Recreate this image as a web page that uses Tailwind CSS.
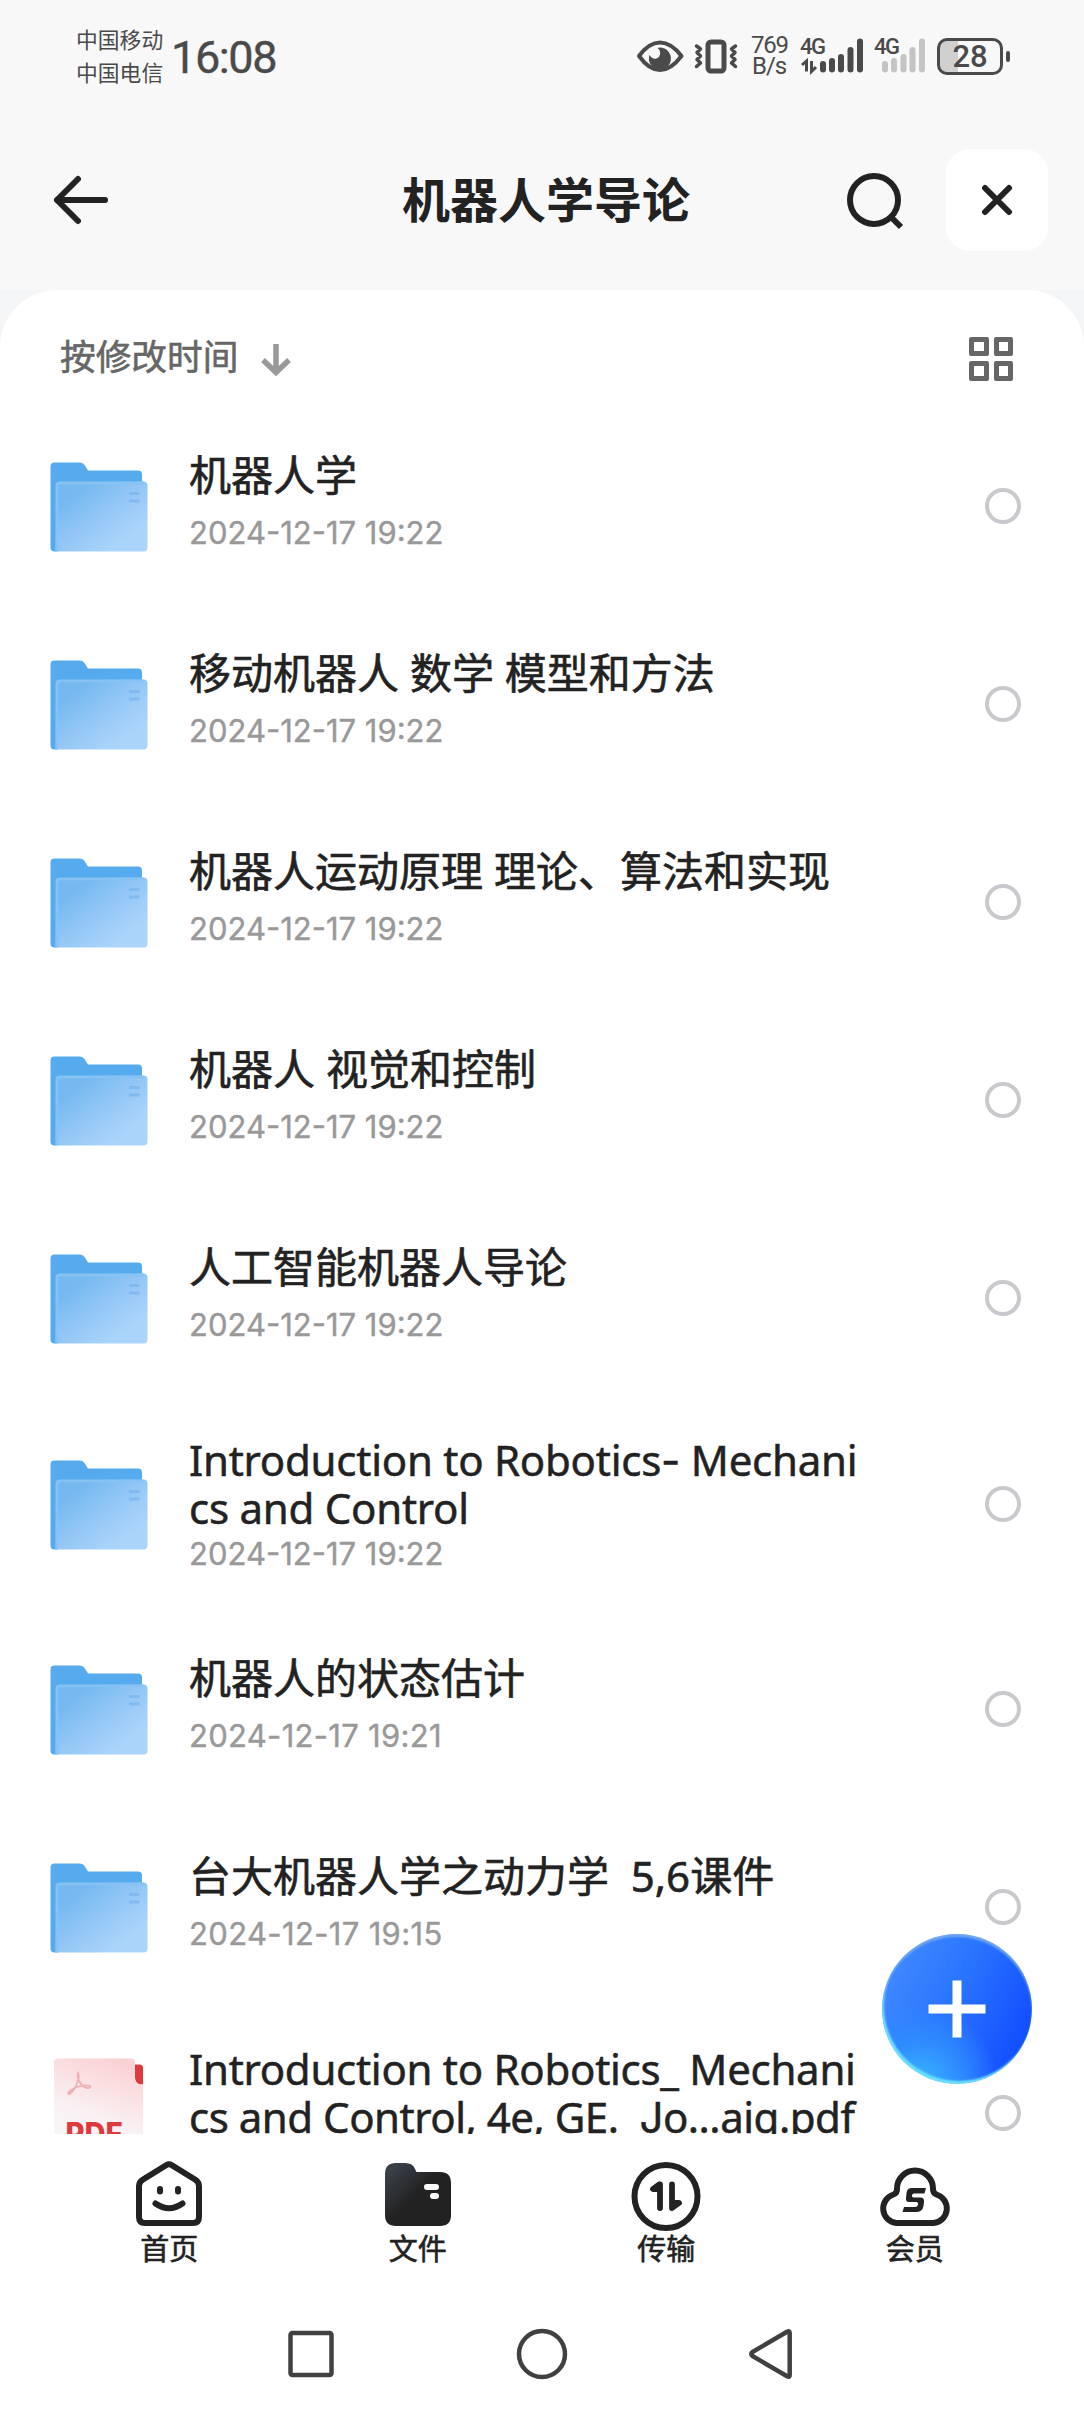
<!DOCTYPE html>
<html lang="zh-CN">
<head>
<meta charset="utf-8">
<title>机器人学导论</title>
<script src="https://cdn.jsdelivr.net/npm/@tailwindcss/browser@4"></script>
</head>
<body class="bg-white">
<svg class="absolute size-0">
  <defs>
    <linearGradient id="front" x1="0" y1="0" x2="1" y2="1">
      <stop offset="0.2" stop-color="#76b9f0"/><stop offset="0.5" stop-color="#94c7f6"/><stop offset="0.8" stop-color="#abd4fa"/>
    </linearGradient>
    <linearGradient id="pdfbg" x1="0.7" y1="0" x2="0.45" y2="0.8">
      <stop offset="0" stop-color="#fbd0d2"/><stop offset="0.7" stop-color="#f9f1f3"/><stop offset="1" stop-color="#f8f5f7"/>
    </linearGradient>
    <linearGradient id="darkfolder" x1="0" y1="0.1" x2="0.6" y2="0.65">
      <stop offset="0.1" stop-color="#3a4049"/><stop offset="0.75" stop-color="#222222"/>
    </linearGradient>
  </defs>
  <symbol id="folder" viewBox="0 0 98 90">
    <path d="M0.5 4.500a4 4 0 0 1 4-4H30q3 0 4.500 2.500L38 8.500H88a4 4 0 0 1 4 4V60H8V89.500H4.500a4 4 0 0 1-4-4Z" fill="#56abee"/>
    <path d="M5.500 23.500a4 4 0 0 1 4-4H93.500a4 4 0 0 1 4 4V85.500a4 4 0 0 1-4 4H5.500Z" fill="url(#front)"/>
    <path d="M7 89V24q0-3 3-3H94" fill="none" stroke="#86c3f4" stroke-width="2.500"/>
    <path d="M79 31.500H89.500M79 39H89.500" stroke="#82b9ee" stroke-width="3"/>
  </symbol>
</svg>
<div class="relative flex h-[2412px] w-[1084px] flex-col overflow-hidden bg-white font-['Noto_Sans','Noto_Sans_CJK_SC',sans-serif] text-[#222222]">

  <!-- Status bar -->
  <div class="flex h-[115px] shrink-0 bg-[#f8f8f8] pl-[76px] text-[#4a4a4a]">
    <div class="w-[88px] pt-[22px] font-['Noto_Sans_CJK_SC',sans-serif] text-[21.800px] leading-[33px]"><div>中国移动</div><div>中国电信</div></div>
    <div class="w-[469px] whitespace-nowrap pl-[7px] pt-[32px] font-['Roboto',sans-serif] text-[45px] leading-[52px] tracking-[-1.400px] [-webkit-text-stroke:0.4px_#4a4a4a]">16:08</div>
    <svg class="h-[115px] w-[115px] shrink-0" viewBox="633 0 115 115" fill="none" stroke="#4a4a4a">
      <path d="M639 56Q649 42.500 660 42.500T681.500 56Q671 70 660 70T639 56Z" stroke-width="4" stroke-linejoin="round"/>
      <path d="M660 47.500A11 11 0 1 1 649.500 55Q652 59.500 656.500 58.500C661.500 57 661 50 657.500 48Z" fill="#4a4a4a" stroke="none"/>
      <rect x="708" y="42" width="16" height="29" rx="3" stroke-width="5"/>
      <path d="M696.500 46L700.500 49 697 52.500 700.500 56 697 59.500 700.500 63 696.500 66.500M735.500 46L731.500 49 735 52.500 731.500 56 735 59.500 731.500 63 735.500 66.500" stroke-width="3.500" stroke-linejoin="round" stroke-linecap="round"/>
    </svg>
    <div class="w-[52px] pl-[3px] pt-[35px] font-['Roboto',sans-serif] text-[24px] leading-[21px] tracking-[-1.300px]"><div>769</div><div class="pl-px tracking-[-1px]">B/s</div></div>
    <div class="w-[74px] pt-[35px] font-['Roboto',sans-serif] text-[22px] font-medium leading-[24px] tracking-[-1.500px]">
      <div class="h-0">4G</div>
      <svg class="-mt-[35px] h-[115px] w-[74px]" viewBox="800 0 74 115" fill="none" stroke="#4a4a4a">
        <path d="M823 64V69.500M832 61V69.500M841 57V69.500M850.500 50V69.500M860 41.500V69.500" stroke-width="6" stroke-linecap="round"/>
        <path d="M802 65L806.500 61V71.500M811.500 61V71.500L816 67" stroke-width="3"/>
      </svg>
    </div>
    <div class="w-[60px] pt-[35px] font-['Roboto',sans-serif] text-[22px] font-medium leading-[24px] tracking-[-1.500px]">
      <div class="relative z-10 h-0">4G</div>
      <svg class="-mt-[35px] h-[115px] w-[60px]" viewBox="874 0 60 115" fill="none" stroke="#c4c4c4">
        <path d="M885 64V69.500M894 61V69.500M903.500 57V69.500M912.500 50V69.500M922 41.500V69.500" stroke-width="6" stroke-linecap="round"/>
      </svg>
    </div>
    <div class="flex h-[112px] items-center gap-[3px] pl-[3px]">
      <div class="flex h-[37px] w-[66px] items-center justify-center overflow-hidden rounded-[10px] border-[3px] border-[#4a4a4a] bg-linear-to-r from-[#d0d0d0] from-30% to-transparent to-30% font-['Roboto',sans-serif] text-[31px] font-medium leading-none">28</div>
      <div class="h-[11px] w-[4px] rounded-full bg-[#4a4a4a]"></div>
    </div>
  </div>

  <!-- Title bar -->
  <div class="flex h-[175px] shrink-0 items-center bg-[#f8f8f8] pb-[5px] pr-[36px] pl-[53px]">
    <svg class="h-[52px] w-[56px]" viewBox="0 0 56 52" fill="none" stroke="#222" stroke-width="6" stroke-linecap="round" stroke-linejoin="round"><path d="M25 5L4 26 25 47M4 26H52"/></svg>
    <div class="flex-1 pb-[7px] pl-[293px] font-['Noto_Sans_CJK_SC',sans-serif] text-[48px] font-bold leading-[60px]">机器人学导论</div>
    <svg class="mr-[42px] h-[60px] w-[60px]" viewBox="844 170 60 60" fill="none" stroke="#222" stroke-width="6"><circle cx="874" cy="200" r="24"/><path d="M891 217L901 227"/></svg>
    <div class="flex size-[102px] items-center justify-center rounded-[24px] bg-white">
      <svg class="size-[32px]" viewBox="-16 -16 32 32" stroke="#222" stroke-width="6" stroke-linecap="round"><path d="M-12-12L12 12M12-12L-12 12"/></svg>
    </div>
  </div>

  <!-- File list -->
  <div class="h-[1844px] shrink-0 overflow-hidden bg-[#f3f5f7]">
    <div class="rounded-t-[57px] bg-white">
      <div class="flex h-[117px] items-center pl-[60px] pr-[71px] pt-[20px]">
        <div class="pb-[7px] font-['Noto_Sans_CJK_SC',sans-serif] text-[35.700px] leading-[48px] text-[#666666] [-webkit-text-stroke:0.6px_#666]">按修改时间</div>
        <svg class="ml-[22px] h-[36px] w-[32px]" viewBox="0 0 32 36" fill="none" stroke="#999" stroke-width="5.500"><path d="M16 3V31M3 19L16 31.500 29 19"/></svg>
        <div class="ml-auto grid grid-cols-2 gap-[5px]">
          <div class="size-[19.500px] rounded-[2px] border-[5px] border-[#666666]"></div><div class="size-[19.500px] rounded-[2px] border-[5px] border-[#666666]"></div>
          <div class="size-[19.500px] rounded-[2px] border-[5px] border-[#666666]"></div><div class="size-[19.500px] rounded-[2px] border-[5px] border-[#666666]"></div>
        </div>
      </div>

      <div class="flex h-[198px] items-center pl-[50px] pr-[63px]">
        <svg class="mt-[2px] h-[90px] w-[98px]"><use href="#folder"/></svg>
        <div class="h-full flex-1 pl-[41px] pt-[44px]"><div class="whitespace-pre text-[42px] leading-[48px] [-webkit-text-stroke:0.6px_#222]">机器人学</div><div class="mt-[16px] font-['Inter',sans-serif] text-[31px] leading-[36px] text-[#999999] [-webkit-text-stroke:0.4px_#999]">2024-12-17 19:22</div></div>
        <div class="size-[36px] rounded-full border-4 border-[#c8c9cc]"></div>
      </div>
      <div class="flex h-[198px] items-center pl-[50px] pr-[63px]">
        <svg class="mt-[2px] h-[90px] w-[98px]"><use href="#folder"/></svg>
        <div class="h-full flex-1 pl-[41px] pt-[44px]"><div class="whitespace-pre text-[42px] leading-[48px] [-webkit-text-stroke:0.6px_#222]">移动机器人 数学 模型和方法</div><div class="mt-[16px] font-['Inter',sans-serif] text-[31px] leading-[36px] text-[#999999] [-webkit-text-stroke:0.4px_#999]">2024-12-17 19:22</div></div>
        <div class="size-[36px] rounded-full border-4 border-[#c8c9cc]"></div>
      </div>
      <div class="flex h-[198px] items-center pl-[50px] pr-[63px]">
        <svg class="mt-[2px] h-[90px] w-[98px]"><use href="#folder"/></svg>
        <div class="h-full flex-1 pl-[41px] pt-[44px]"><div class="whitespace-pre text-[42px] leading-[48px] [-webkit-text-stroke:0.6px_#222]">机器人运动原理 理论、算法和实现</div><div class="mt-[16px] font-['Inter',sans-serif] text-[31px] leading-[36px] text-[#999999] [-webkit-text-stroke:0.4px_#999]">2024-12-17 19:22</div></div>
        <div class="size-[36px] rounded-full border-4 border-[#c8c9cc]"></div>
      </div>
      <div class="flex h-[198px] items-center pl-[50px] pr-[63px]">
        <svg class="mt-[2px] h-[90px] w-[98px]"><use href="#folder"/></svg>
        <div class="h-full flex-1 pl-[41px] pt-[44px]"><div class="whitespace-pre text-[42px] leading-[48px] [-webkit-text-stroke:0.6px_#222]">机器人 视觉和控制</div><div class="mt-[16px] font-['Inter',sans-serif] text-[31px] leading-[36px] text-[#999999] [-webkit-text-stroke:0.4px_#999]">2024-12-17 19:22</div></div>
        <div class="size-[36px] rounded-full border-4 border-[#c8c9cc]"></div>
      </div>
      <div class="flex h-[198px] items-center pl-[50px] pr-[63px]">
        <svg class="mt-[2px] h-[90px] w-[98px]"><use href="#folder"/></svg>
        <div class="h-full flex-1 pl-[41px] pt-[44px]"><div class="whitespace-pre text-[42px] leading-[48px] [-webkit-text-stroke:0.6px_#222]">人工智能机器人导论</div><div class="mt-[16px] font-['Inter',sans-serif] text-[31px] leading-[36px] text-[#999999] [-webkit-text-stroke:0.4px_#999]">2024-12-17 19:22</div></div>
        <div class="size-[36px] rounded-full border-4 border-[#c8c9cc]"></div>
      </div>
      <div class="flex h-[213px] items-center pl-[50px] pr-[63px]">
        <svg class="mt-[2px] h-[90px] w-[98px]"><use href="#folder"/></svg>
        <div class="h-full flex-1 pl-[41px] pt-[39px]"><div class="whitespace-pre text-[42px] leading-[48px] tracking-[-0.250px] [-webkit-text-stroke:0.5px_#222]">Introduction to Robotics<span class="font-['Inter',sans-serif] leading-none">-</span> Mechani<br>cs and Control</div><div class="mt-[4px] font-['Inter',sans-serif] text-[31px] leading-[36px] text-[#999999] [-webkit-text-stroke:0.4px_#999]">2024-12-17 19:22</div></div>
        <div class="size-[36px] rounded-full border-4 border-[#c8c9cc]"></div>
      </div>
      <div class="flex h-[198px] items-center pl-[50px] pr-[63px]">
        <svg class="mt-[2px] h-[90px] w-[98px]"><use href="#folder"/></svg>
        <div class="h-full flex-1 pl-[41px] pt-[44px]"><div class="whitespace-pre text-[42px] leading-[48px] [-webkit-text-stroke:0.6px_#222]">机器人的状态估计</div><div class="mt-[16px] font-['Inter',sans-serif] text-[31px] leading-[36px] tracking-[0.300px] text-[#999999] [-webkit-text-stroke:0.4px_#999]">2024-12-17 19:21</div></div>
        <div class="size-[36px] rounded-full border-4 border-[#c8c9cc]"></div>
      </div>
      <div class="flex h-[198px] items-center pl-[50px] pr-[63px]">
        <svg class="mt-[2px] h-[90px] w-[98px]"><use href="#folder"/></svg>
        <div class="h-full flex-1 pl-[41px] pt-[44px]"><div class="whitespace-pre text-[42px] leading-[48px] [-webkit-text-stroke:0.6px_#222]">台大机器人学之动力学  5,6课件</div><div class="mt-[16px] font-['Inter',sans-serif] text-[31px] leading-[36px] tracking-[0.350px] text-[#999999] [-webkit-text-stroke:0.4px_#999]">2024-12-17 19:15</div></div>
        <div class="size-[36px] rounded-full border-4 border-[#c8c9cc]"></div>
      </div>
      <div class="flex h-[213px] items-center pl-[50px] pr-[63px]">
        <svg class="h-[109px] w-[98px]" viewBox="0 0 98 109">
          <path d="M84 8H89a4 4 0 0 1 4 4V108H84Z" fill="#f7eef1"/>
          <path d="M85 6.500H89.500a3.500 3.500 0 0 1 3.500 3.500V26.500H91q-6-1-6-7Z" fill="#dd3a3f"/>
          <path d="M4 4.500a4 4 0 0 1 4-4H81a4 4 0 0 1 4 4V20q0 6 6 6.500H93V108H4Z" fill="url(#pdfbg)"/>
          <path d="M28 15C26 21 33 31 39 30C44 28 35 26 27 29C20 32 16 36 19 36C24 34 31 20 28 15Z" fill="none" stroke="#efb0b4" stroke-width="1.800"/>
          <text x="15.500" y="87" font-family="Inter, sans-serif" font-weight="800" font-size="31" textLength="57" lengthAdjust="spacingAndGlyphs" fill="#dd3a3f">PDF</text>
        </svg>
        <div class="h-full flex-1 pl-[41px] pt-[39px]"><div class="whitespace-pre text-[42px] leading-[48px] tracking-[-0.280px] [-webkit-text-stroke:0.5px_#222]">Introduction to Robotics_ Mechani<br><span class="tracking-[-0.480px]">cs and Control, 4e, GE.  <span class="font-['Inter',sans-serif] leading-none">J</span>o...aig.pdf</span></div></div>
        <div class="size-[36px] rounded-full border-4 border-[#c8c9cc]"></div>
      </div>
    </div>
  </div>

  <!-- Tab bar -->
  <div class="grid h-[146px] shrink-0 grid-cols-4 bg-white px-[45px] pt-[22px] font-['Noto_Sans_CJK_SC',sans-serif] text-[29px] leading-[40px] [-webkit-text-stroke:0.6px_#222]">
    <div class="flex flex-col items-center">
      <svg class="h-[72px] w-[72px]" viewBox="0 0 72 72" fill="none" stroke="#222" stroke-width="6" stroke-linecap="round" stroke-linejoin="round"><path d="M33.500 9Q36 7.400 38.500 9L62 23.500Q66 26 66 30V61Q66 67 60 67H12Q6 67 6 61V30Q6 26 10 23.500Z"/><path d="M27 33V35.500M45 33V35.500"/><path d="M22.500 47.500Q36 57 49.500 47.500"/></svg>
      <div class="-mt-px">首页</div>
    </div>
    <div class="flex flex-col items-center">
      <svg class="h-[72px] w-[72px]" viewBox="0 0 72 72"><path d="M3 18Q3 7 14 7H23Q31 7 33 13L34.500 16H58Q69 16 69 27V59Q69 70 58 70H14Q3 70 3 59Z" fill="url(#darkfolder)"/><path d="M45 31H54M51 40H54" stroke="#fff" stroke-width="6" stroke-linecap="round"/></svg>
      <div class="-mt-px">文件</div>
    </div>
    <div class="flex flex-col items-center">
      <svg class="h-[72px] w-[72px] overflow-visible" viewBox="0 0 72 72"><circle cx="36" cy="40.500" r="31.500" fill="none" stroke="#222" stroke-width="6"/><path d="M30 28.500V52M29 28.500L23 33H30M42 28.500V52L49 47H42" fill="#222" stroke="#222" stroke-width="5.800" stroke-linecap="round" stroke-linejoin="round"/></svg>
      <div class="-mt-px">传输</div>
    </div>
    <div class="flex flex-col items-center">
      <svg class="h-[72px] w-[72px] overflow-visible" viewBox="0 0 72 72"><path d="M17.500 67A14.600 14.600 0 0 1 14.500 38.500Q18.300 37 18 32.500A18 18 0 0 1 54 32.500Q53.700 37 57.500 38.500A14.600 14.600 0 0 1 54.500 67Z" fill="none" stroke="#222" stroke-width="6" stroke-linejoin="round"/><path d="M47 32H33Q28 32 27.500 37L27 42Q26.500 46 30 46H37Q39.500 46 39 48.500T36 51H25L23.500 56H37Q43.500 56 44.500 50L45 46Q45.500 41.500 41.500 41.500H35Q32.500 41.500 33 39.300T35.500 37.500H45.500Z" fill="#222"/></svg>
      <div class="-mt-px">会员</div>
    </div>
  </div>

  <!-- System navigation -->
  <div class="flex-1 bg-white">
    <svg class="h-[132px] w-[1084px]" viewBox="0 2280 1084 132" fill="none" stroke="#404040" stroke-width="4.500" stroke-linejoin="round"><rect x="290.500" y="2333" width="41" height="42" rx="2"/><circle cx="542" cy="2354" r="23"/><path d="M787.500 2331.500Q789.700 2330.500 789.700 2333V2375Q789.700 2377.500 787.500 2376.500L752.500 2356Q750 2354 752.500 2352Z"/></svg>
  </div>

  <!-- Add button -->
  <div class="absolute top-[1934px] left-[882px] flex size-[150px] items-center justify-center rounded-full bg-[radial-gradient(circle_at_25%_100%,#38b6ff_0%,#2f8cff_22%,transparent_42%),linear-gradient(115deg,#3d86ff_15%,#2a75ff_45%,#1450ff_85%)] shadow-[inset_0_3px_2px_#6ea6f0,inset_2px_-3px_2px_#6be0ff]">
    <svg class="size-[58px]" viewBox="-29 -29 58 58" stroke="#fff" stroke-width="9"><path d="M-28.500 0H28.500M0-28.500V28.500"/></svg>
  </div>
</div>
</body>
</html>
